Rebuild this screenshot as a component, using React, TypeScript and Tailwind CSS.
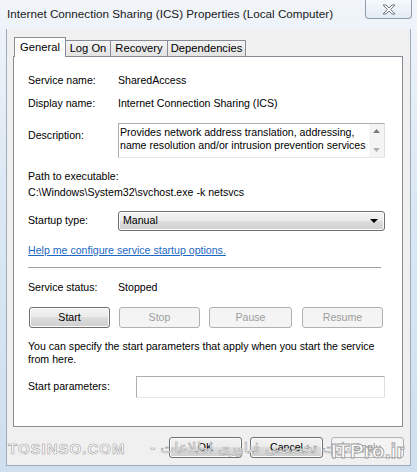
const FONT = "font-['Liberation_Sans',Arial,sans-serif]";

const TABS = ["General", "Log On", "Recovery", "Dependencies"];
const TAB_W: Record<string, string> = {
  General: "w-[52px]",
  "Log On": "w-[45px]",
  Recovery: "w-[57px]",
  Dependencies: "w-[78px]",
};

function WinButton({
  label,
  width,
  disabled,
}: {
  label: string;
  width: string;
  disabled?: boolean;
}) {
  if (disabled) {
    return (
      <div
        className={`${width} h-[21px] rounded-[3px] border border-[#adb2b5] bg-[#f4f4f4] text-[#9c9c9c] flex items-center justify-center`}
      >
        {label}
      </div>
    );
  }
  return (
    <div
      className={`${width} h-[21px] rounded-[3px] border border-[#707070] bg-[linear-gradient(#f2f2f2_0%,#ebebeb_50%,#dddddd_50%,#cfcfcf_100%)] shadow-[inset_0_0_0_1px_#fcfcfc] text-black flex items-center justify-center`}
    >
      {label}
    </div>
  );
}

export default function App() {
  return (
    <div
      className={`${FONT} relative w-[417px] h-[472px] overflow-hidden bg-[linear-gradient(180deg,#f1f5fa_0%,#dce8f4_40%,#cfdff0_100%)] text-[10.6px] text-black select-none`}
    >
      {/* title bar */}
      <div className="h-[29px] flex items-center pl-[7px] pb-[1px] text-[11.7px] text-[#1a1a1a]">
        Internet Connection Sharing (ICS) Properties (Local Computer)
      </div>
      <div className="absolute top-0 left-[365px] w-[47px] h-[19px] rounded-b-[4px] border border-t-0 border-[#8f9bab] bg-[linear-gradient(#f6f9fc,#e3ebf4)] flex items-center justify-center">
        <svg width="14" height="11" viewBox="0 0 14 11">
          <path
            d="M1 1 H4 L7 4 L10 1 H13 L8.6 5.5 L13 10 H10 L7 7 L4 10 H1 L5.4 5.5 Z"
            fill="#ffffff"
            stroke="#6d7684"
            strokeWidth="1"
            strokeLinejoin="round"
          />
        </svg>
      </div>

      {/* dialog body */}
      <div className="ml-[6px] w-[405px] h-[437px] bg-[#f0f0f0] border-x border-b border-[#9eabba] pl-[6px] pt-[8px]">
        {/* tabs */}
        <div className="h-[19px] flex items-end pl-[1px]">
          {TABS.map((t, i) =>
            i === 0 ? (
              <div
                key={t}
                className={`${TAB_W[t]} relative z-10 -mb-px h-[20px] bg-white border border-b-0 border-[#898c95] flex items-center justify-center pb-[1px] text-[11.2px]`}
              >
                {t}
              </div>
            ) : (
              <div
                key={t}
                className={`${TAB_W[t]} h-[16px] border border-b-0 border-l-0 border-[#898c95] bg-[linear-gradient(#f3f3f3,#e3e3e3)] flex items-center justify-center text-[11.2px]`}
              >
                {t}
              </div>
            )
          )}
        </div>

        {/* tab panel */}
        <div className="w-[390px] h-[371px] border border-[#898c95] bg-white pl-[14px] pt-[17px]">
          <div className="flex h-[13px] leading-[13px]">
            <span className="w-[90px]">Service name:</span>
            <span>SharedAccess</span>
          </div>
          <div className="flex h-[13px] leading-[13px] mt-[10px]">
            <span className="w-[90px]">Display name:</span>
            <span>Internet Connection Sharing (ICS)</span>
          </div>
          <div className="flex mt-[13px]">
            <span className="w-[90px] pt-[6px] leading-[13px]">Description:</span>
            <div className="relative w-[267px] h-[35px] border border-[#abadb3] border-r-[#dbdfe6] border-b-[#e3e9ef] bg-white">
              <div className="pl-[1px] pt-[2px] pr-[15px] leading-[12.5px] whitespace-nowrap overflow-hidden">
                Provides network address translation, addressing,
                <br />
                name resolution and/or intrusion prevention services
              </div>
              <div className="absolute right-0 top-0 w-[15px] h-full bg-[#f4f4f4] flex flex-col items-center justify-between py-[5px]">
                <svg width="7" height="4" viewBox="0 0 7 4">
                  <path d="M0 4 L3.5 0 L7 4 Z" fill="#7a7a7a" />
                </svg>
                <svg width="7" height="4" viewBox="0 0 7 4">
                  <path d="M0 0 L7 0 L3.5 4 Z" fill="#b0b0b0" />
                </svg>
              </div>
            </div>
          </div>

          <div className="mt-[12px] leading-[13px]">Path to executable:</div>
          <div className="mt-[3px] leading-[13px]">
            C:\Windows\System32\svchost.exe -k netsvcs
          </div>

          <div className="flex items-center mt-[12px]">
            <span className="w-[90px]">Startup type:</span>
            <div className="w-[267px] h-[20px] rounded-[3px] border border-[#707070] bg-[linear-gradient(#f2f2f2_0%,#ebebeb_50%,#dddddd_50%,#cfcfcf_100%)] shadow-[inset_0_0_0_1px_#fcfcfc] flex items-center justify-between pl-[4px] pr-[6px]">
              <span>Manual</span>
              <svg width="8" height="4" viewBox="0 0 8 4">
                <path d="M0 0 L8 0 L4 4 Z" fill="#000" />
              </svg>
            </div>
          </div>

          <div className="mt-[13px] leading-[13px] text-[#1d68c2] underline underline-offset-[1px]">
            Help me configure service startup options.
          </div>

          <div className="mt-[10px] w-[353px] h-px bg-[#a0a0a0]" />

          <div className="flex h-[13px] leading-[13px] mt-[13px]">
            <span className="w-[90px]">Service status:</span>
            <span>Stopped</span>
          </div>

          <div className="flex mt-[13px] ml-[1px]">
            <WinButton label="Start" width="w-[81px]" />
            <div className="ml-[9px]">
              <WinButton label="Stop" width="w-[81px]" disabled />
            </div>
            <div className="ml-[9px]">
              <WinButton label="Pause" width="w-[83px]" disabled />
            </div>
            <div className="ml-[10px]">
              <WinButton label="Resume" width="w-[81px]" disabled />
            </div>
          </div>

          <div className="mt-[12px] leading-[13px] w-[360px]">
            You can specify the start parameters that apply when you start the service
            <br />
            from here.
          </div>

          <div className="flex items-center mt-[10px]">
            <span className="w-[108px]">Start parameters:</span>
            <div className="w-[249px] h-[22px] border border-[#abadb3] border-r-[#dbdfe6] border-b-[#e3e9ef] bg-white" />
          </div>
        </div>

        {/* dialog buttons */}
        <div className="flex justify-end gap-[8px] mt-[10px] w-[391px]">
          <WinButton label="OK" width="w-[73px]" />
          <WinButton label="Cancel" width="w-[73px]" />
          <WinButton label="Apply" width="w-[73px]" disabled />
        </div>
      </div>

      {/* watermark */}
      <div className="absolute left-[8px] top-[438px] text-[15px] font-bold tracking-[1px] text-white/90 [-webkit-text-stroke:0.6px_#a2a2a2]">
        TOSINSO.COM
      </div>
      <div
        dir="rtl"
        className="absolute left-[150px] top-[437px] text-[15px] text-white/90 [-webkit-text-stroke:0.6px_#a2a2a2] font-['DejaVu_Sans',sans-serif]"
      >
        وب سایت تخصصی فناوری اطلاعات -
      </div>
      <div className="absolute left-[331px] top-[435px] text-[21px] font-bold text-white/90 [-webkit-text-stroke:0.8px_#9a9a9a]">
        ITPro.ir
      </div>
    </div>
  );
}
